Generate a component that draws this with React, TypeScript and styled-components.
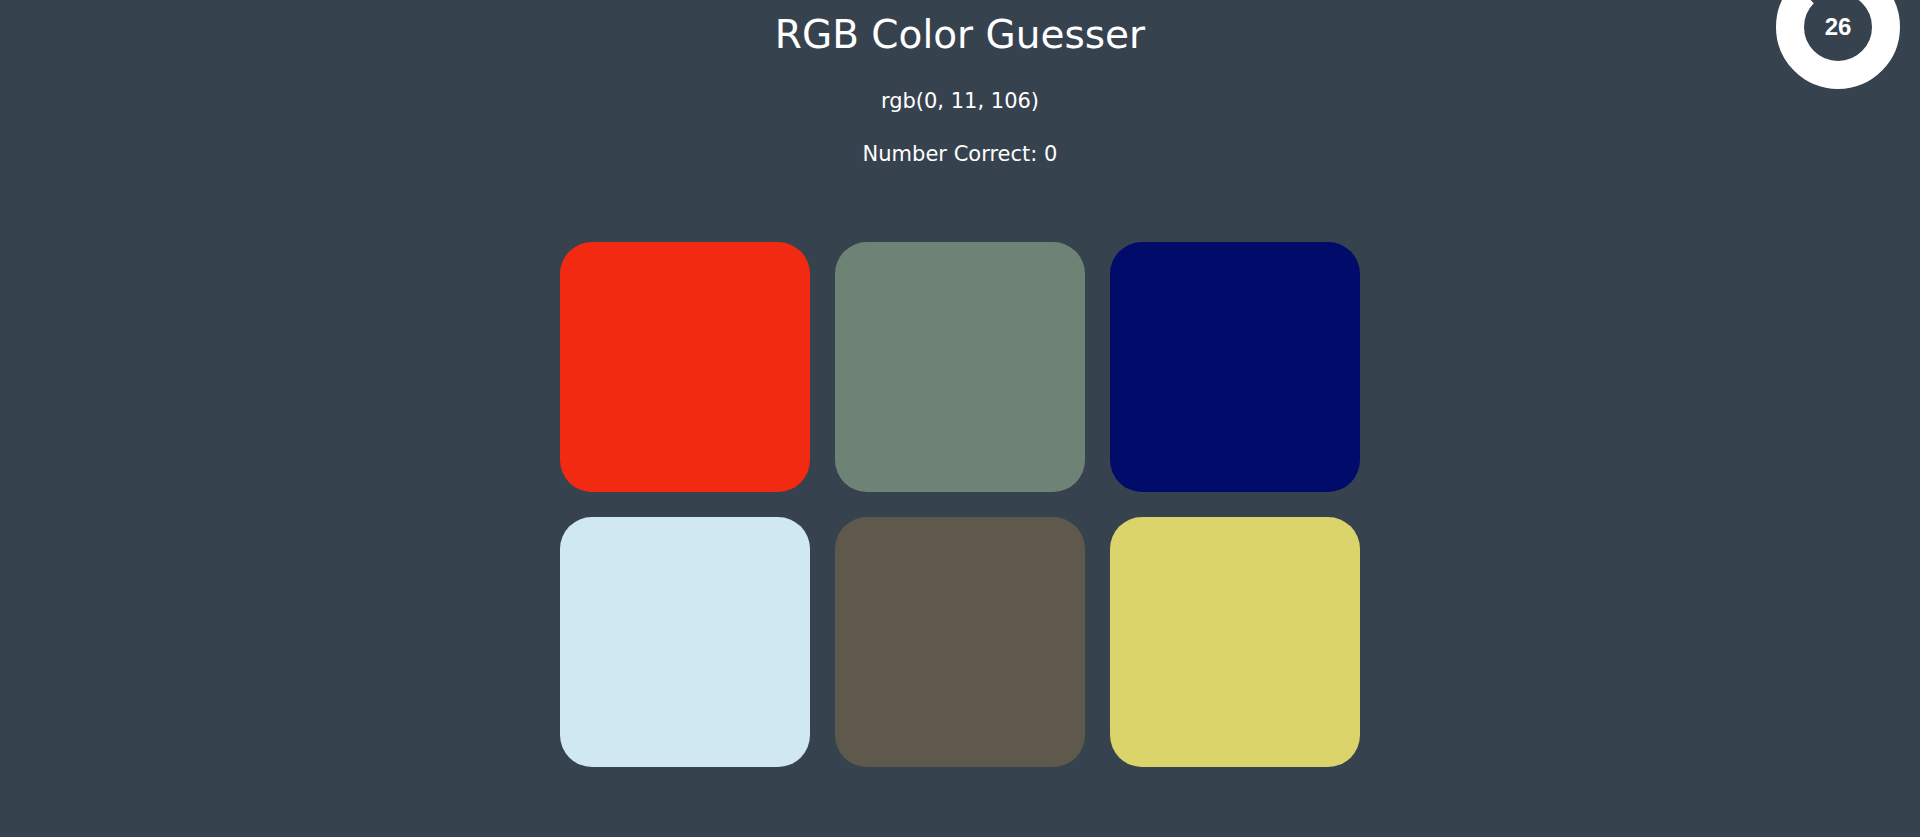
import { createGlobalStyle, styled } from "styled-components"

const GlobalStyle = createGlobalStyle`
	html, body {
		margin: 0;
		padding: 0;
		background: #37424f;
	}

	body {
		font-family: "DejaVu Sans", "Open Sans", sans-serif;
		color: #ffffff;
	}
`

const Page = styled.main`
	position: relative;
	min-height: 100vh;
	overflow: hidden;
	display: flex;
	flex-direction: column;
	align-items: center;
`

const Header = styled.header`
	display: flex;
	flex-direction: column;
	align-items: center;
	padding-top: 10px;
`

const Title = styled.h1`
	margin: 0;
	font-size: 39px;
	font-weight: 400;
	line-height: 50px;
`

const Info = styled.p`
	margin: 0;
	font-size: 21px;
	line-height: 26px;

	&:first-of-type {
		margin-top: 28px;
	}

	& + & {
		margin-top: 27px;
	}
`

const Board = styled.section`
	margin-top: 75px;
	display: grid;
	grid-template-columns: repeat(3, 250px);
	grid-auto-rows: 250px;
	gap: 25px;
`

const Swatch = styled.button<{ $color: string }>`
	border: none;
	padding: 0;
	border-radius: 32px;
	background: ${(p) => p.$color};
	cursor: pointer;
`

const Timer = styled.div`
	position: absolute;
	top: -35px;
	right: 20px;
	width: 124px;
	height: 124px;
	display: flex;
	align-items: center;
	justify-content: center;

	& svg {
		position: absolute;
		inset: 0;
	}
`

const TimeLeft = styled.span`
	position: relative;
	font-family: "Liberation Sans", Arial, sans-serif;
	font-size: 24px;
	font-weight: 700;
	line-height: 1;
	color: #ffffff;
`

const colors = ["#f22a11", "#6f8276", "#000b6a", "#cfe8f1", "#5f584c", "#dbd46a"]

const RADIUS = 48
const CIRC = 2 * Math.PI * RADIUS

export default function App() {
	const remaining = 314 / 360

	return (
		<>
			<GlobalStyle />
			<Page>
				<Header>
					<Title>RGB Color Guesser</Title>
					<Info>rgb(0, 11, 106)</Info>
					<Info>Number Correct: 0</Info>
				</Header>
				<Board>
					{colors.map((c) => (
						<Swatch key={c} $color={c} />
					))}
				</Board>
				<Timer>
					<svg width="124" height="124" viewBox="0 0 124 124">
						<circle
							cx="62"
							cy="62"
							r={RADIUS}
							fill="none"
							stroke="#ffffff"
							strokeWidth="28"
							strokeDasharray={`${CIRC * remaining} ${CIRC}`}
							transform="rotate(-90 62 62)"
						/>
					</svg>
					<TimeLeft>26</TimeLeft>
				</Timer>
			</Page>
		</>
	)
}
